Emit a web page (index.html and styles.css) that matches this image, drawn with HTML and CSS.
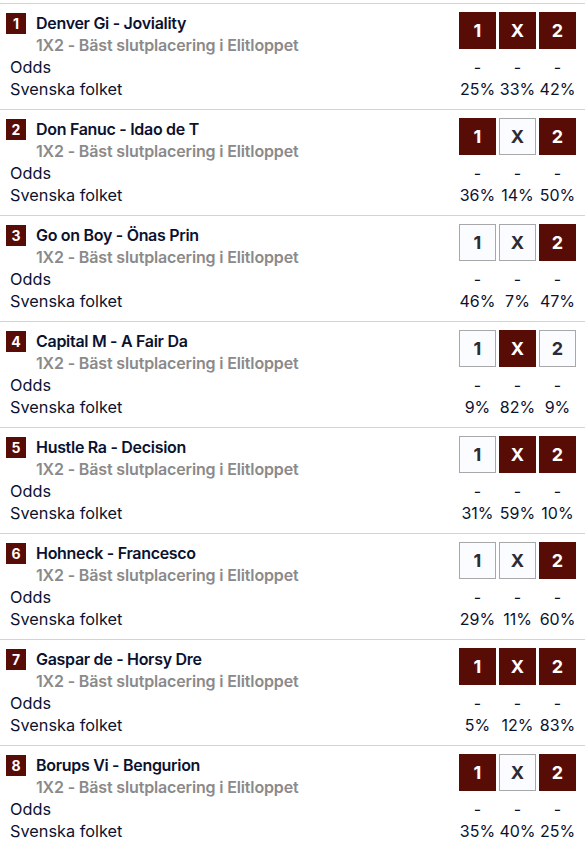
FILE: index.html
```html
<!DOCTYPE html>
<html lang="sv">
<head>
<meta charset="utf-8">
<title>Elitloppet</title>
<link rel="stylesheet" href="styles.css">
</head>
<body>
<div class="list">
  <div class="row">
    <div class="top">
      <div class="names">
        <div class="title"><span class="badge">1</span><span>Denver Gi - Joviality</span></div>
        <div class="sub">1X2 - Bäst slutplacering i Elitloppet</div>
      </div>
      <div class="btns"><span class="btn on">1</span><span class="btn on">X</span><span class="btn on">2</span></div>
    </div>
    <div class="line"><span class="label">Odds</span><div class="vals"><span>-</span><span>-</span><span>-</span></div></div>
    <div class="line"><span class="label">Svenska folket</span><div class="vals"><span>25%</span><span>33%</span><span>42%</span></div></div>
  </div>
  <div class="row">
    <div class="top">
      <div class="names">
        <div class="title"><span class="badge">2</span><span>Don Fanuc - Idao de T</span></div>
        <div class="sub">1X2 - Bäst slutplacering i Elitloppet</div>
      </div>
      <div class="btns"><span class="btn on">1</span><span class="btn">X</span><span class="btn on">2</span></div>
    </div>
    <div class="line"><span class="label">Odds</span><div class="vals"><span>-</span><span>-</span><span>-</span></div></div>
    <div class="line"><span class="label">Svenska folket</span><div class="vals"><span>36%</span><span>14%</span><span>50%</span></div></div>
  </div>
  <div class="row">
    <div class="top">
      <div class="names">
        <div class="title"><span class="badge">3</span><span>Go on Boy - Önas Prin</span></div>
        <div class="sub">1X2 - Bäst slutplacering i Elitloppet</div>
      </div>
      <div class="btns"><span class="btn">1</span><span class="btn">X</span><span class="btn on">2</span></div>
    </div>
    <div class="line"><span class="label">Odds</span><div class="vals"><span>-</span><span>-</span><span>-</span></div></div>
    <div class="line"><span class="label">Svenska folket</span><div class="vals"><span>46%</span><span>7%</span><span>47%</span></div></div>
  </div>
  <div class="row">
    <div class="top">
      <div class="names">
        <div class="title"><span class="badge">4</span><span>Capital M - A Fair Da</span></div>
        <div class="sub">1X2 - Bäst slutplacering i Elitloppet</div>
      </div>
      <div class="btns"><span class="btn">1</span><span class="btn on">X</span><span class="btn">2</span></div>
    </div>
    <div class="line"><span class="label">Odds</span><div class="vals"><span>-</span><span>-</span><span>-</span></div></div>
    <div class="line"><span class="label">Svenska folket</span><div class="vals"><span>9%</span><span>82%</span><span>9%</span></div></div>
  </div>
  <div class="row">
    <div class="top">
      <div class="names">
        <div class="title"><span class="badge">5</span><span>Hustle Ra - Decision</span></div>
        <div class="sub">1X2 - Bäst slutplacering i Elitloppet</div>
      </div>
      <div class="btns"><span class="btn">1</span><span class="btn on">X</span><span class="btn on">2</span></div>
    </div>
    <div class="line"><span class="label">Odds</span><div class="vals"><span>-</span><span>-</span><span>-</span></div></div>
    <div class="line"><span class="label">Svenska folket</span><div class="vals"><span>31%</span><span>59%</span><span>10%</span></div></div>
  </div>
  <div class="row">
    <div class="top">
      <div class="names">
        <div class="title"><span class="badge">6</span><span>Hohneck - Francesco</span></div>
        <div class="sub">1X2 - Bäst slutplacering i Elitloppet</div>
      </div>
      <div class="btns"><span class="btn">1</span><span class="btn">X</span><span class="btn on">2</span></div>
    </div>
    <div class="line"><span class="label">Odds</span><div class="vals"><span>-</span><span>-</span><span>-</span></div></div>
    <div class="line"><span class="label">Svenska folket</span><div class="vals"><span>29%</span><span>11%</span><span>60%</span></div></div>
  </div>
  <div class="row">
    <div class="top">
      <div class="names">
        <div class="title"><span class="badge">7</span><span>Gaspar de - Horsy Dre</span></div>
        <div class="sub">1X2 - Bäst slutplacering i Elitloppet</div>
      </div>
      <div class="btns"><span class="btn on">1</span><span class="btn on">X</span><span class="btn on">2</span></div>
    </div>
    <div class="line"><span class="label">Odds</span><div class="vals"><span>-</span><span>-</span><span>-</span></div></div>
    <div class="line"><span class="label">Svenska folket</span><div class="vals"><span>5%</span><span>12%</span><span>83%</span></div></div>
  </div>
  <div class="row">
    <div class="top">
      <div class="names">
        <div class="title"><span class="badge">8</span><span>Borups Vi - Bengurion</span></div>
        <div class="sub">1X2 - Bäst slutplacering i Elitloppet</div>
      </div>
      <div class="btns"><span class="btn on">1</span><span class="btn">X</span><span class="btn on">2</span></div>
    </div>
    <div class="line"><span class="label">Odds</span><div class="vals"><span>-</span><span>-</span><span>-</span></div></div>
    <div class="line"><span class="label">Svenska folket</span><div class="vals"><span>35%</span><span>40%</span><span>25%</span></div></div>
  </div>
</div>
</body>
</html>
```
FILE: styles.css
```css
html, body {
  margin: 0;
  padding: 0;
  background: #ffffff;
}
body {
  font-family: Inter, "Liberation Sans", sans-serif;
  font-size: 16px;
  color: #0b1230;
}
.list {
  padding-top: 3px;
}
.row {
  border-top: 1px solid #d4d4d4;
  padding: 8px 9px 9px 6px;
  display: flex;
  flex-direction: column;
}
.top {
  display: flex;
  justify-content: space-between;
  align-items: flex-start;
}
.names {
  display: flex;
  flex-direction: column;
}
.title {
  display: flex;
  align-items: center;
  gap: 10px;
  height: 22px;
  line-height: 22px;
  font-weight: 600;
  letter-spacing: -0.3px;
}
.badge {
  width: 20px;
  height: 21px;
  background: #570c06;
  color: #ffffff;
  font-size: 14px;
  font-weight: 700;
  line-height: 21px;
  text-align: center;
  letter-spacing: 0;
}
.sub {
  padding-left: 30px;
  line-height: 22px;
  height: 22px;
  color: #8a8a8a;
  font-weight: 600;
  letter-spacing: -0.15px;
}
.btns {
  display: flex;
  gap: 3px;
}
.btn {
  box-sizing: border-box;
  width: 37px;
  height: 37px;
  display: flex;
  align-items: center;
  justify-content: center;
  font-size: 18px;
  font-weight: 700;
  background: #fbfcff;
  border: 1px solid #a8a8a8;
  color: #2b2b36;
}
.btn.on {
  background: #570c06;
  border-color: #570c06;
  color: #ffffff;
}
.line {
  display: flex;
  justify-content: space-between;
  align-items: center;
  height: 22px;
  line-height: 22px;
}
.label {
  padding-left: 4px;
  font-size: 16.3px;
}
.vals {
  display: flex;
  gap: 3px;
}
.vals span {
  width: 37px;
  text-align: center;
}
```
